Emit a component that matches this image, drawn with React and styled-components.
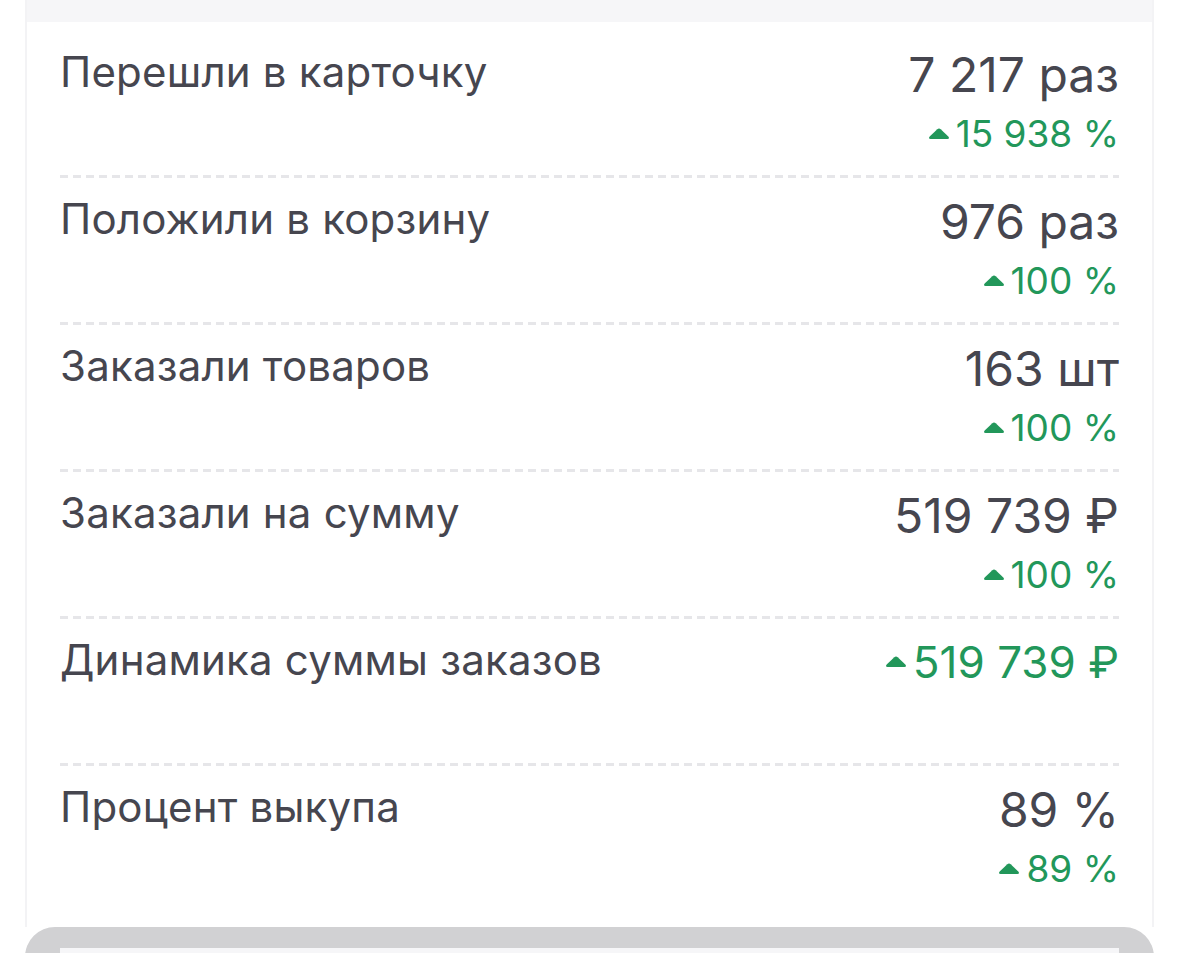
import React from 'react';
import styled, { createGlobalStyle } from 'styled-components';

const GlobalStyle = createGlobalStyle`
  body {
    margin: 0;
    background: #ffffff;
    font-family: Inter, "Noto Sans", sans-serif;
  }
`;

const Page = styled.div`
  padding: 0 25px;
  height: 953px;
  overflow: hidden;
`;

const Card = styled.div`
  background: #ffffff;
  border-left: 2px solid #f3f3f5;
  border-right: 2px solid #f3f3f5;
`;

const TopStrip = styled.div`
  height: 22px;
  background: #f6f6f8;
`;

const List = styled.div`
  padding: 12px 33px 11px 33px;
`;

const Row = styled.div`
  display: flex;
  justify-content: space-between;
  align-items: flex-start;
  height: 144px;
  padding-top: 12px;
  box-sizing: border-box;
  background-image: ${({ $last }) =>
    $last ? 'none' : 'repeating-linear-gradient(90deg, #e6e6e9 0 8px, transparent 8px 13px)'};
  background-size: 100% 3px;
  background-position: bottom left;
  background-repeat: no-repeat;
  margin-bottom: 3px;
`;

const Label = styled.div`
  font-size: 42px;
  line-height: 52px;
  color: #46464f;
  letter-spacing: 0.2px;
`;

const Values = styled.div`
  display: flex;
  flex-direction: column;
  align-items: flex-end;
`;

const Value = styled.div`
  font-size: 48px;
  line-height: 58px;
  color: #46464f;
`;

const Delta = styled.div`
  display: flex;
  align-items: center;
  gap: 6px;
  color: #22975a;
  font-size: ${({ $big }) => ($big ? '44px' : '37px')};
  line-height: ${({ $big }) => ($big ? '56px' : '46px')};
  margin-top: ${({ $big }) => ($big ? '0' : '7px')};
`;

const Arrow = () => (
  <svg width="22" height="12" viewBox="0 0 22 12">
    <path d="M9.3 1.3 Q11 -0.3 12.7 1.3 L20.3 8.6 Q22 11 19.4 11 L2.6 11 Q0 11 1.7 8.6 Z" fill="#22975a" />
  </svg>
);

const Bottom = styled.div`
  height: 60px;
  background: #d1d1d3;
  border-radius: 30px 30px 0 0;
  padding: 21px 35px 0 35px;
  box-sizing: border-box;
`;

const BottomInner = styled.div`
  height: 100%;
  background: #f6f6f8;
`;

const rows = [
  { label: 'Перешли в карточку', value: '7 217 раз', delta: '15 938 %' },
  { label: 'Положили в корзину', value: '976 раз', delta: '100 %' },
  { label: 'Заказали товаров', value: '163 шт', delta: '100 %' },
  { label: 'Заказали на сумму', value: '519 739 ₽', delta: '100 %' },
  { label: 'Динамика суммы заказов', delta: '519 739 ₽', big: true },
  { label: 'Процент выкупа', value: '89 %', delta: '89 %' },
];

const App = () => {
  return (
    <Page>
      <GlobalStyle />
      <Card>
        <TopStrip />
        <List>
          {rows.map((r, i) => (
            <Row key={r.label} $last={i === rows.length - 1}>
              <Label>{r.label}</Label>
              <Values>
                {r.value && <Value>{r.value}</Value>}
                <Delta $big={r.big}>
                  <Arrow />
                  {r.delta}
                </Delta>
              </Values>
            </Row>
          ))}
        </List>
      </Card>
      <Bottom>
        <BottomInner />
      </Bottom>
    </Page>
  );
};

export default App;
